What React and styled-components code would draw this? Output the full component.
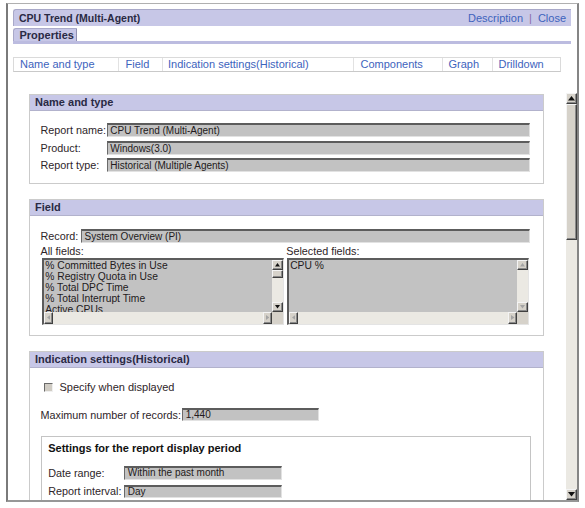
import React from 'react';
import styled, { createGlobalStyle } from 'styled-components';

const GlobalStyle = createGlobalStyle`
  html, body { margin: 0; padding: 0; background: #fff; }
  body { font-family: "Liberation Sans", Arial, sans-serif; font-size: 11px; line-height: 1.15; color: #333; }
  * { box-sizing: border-box; }
`;

const LAV = '#c7c7e7';

const Frame = styled.div`
  margin: 3px 0 0 6px;
  width: 573px;
  height: 499px;
  border-top: 1px solid #b0b0b0;
  border-left: 2px solid #7a7a7a;
  border-right: 2px solid #858585;
  border-bottom: 2px solid #979797;
  display: flex;
  flex-direction: column;
  overflow: hidden;
`;

const TitleBar = styled.div`
  flex: none;
  margin: 5px 6px 0 4.5px;
  height: 17px;
  background: ${LAV};
  border-top: 1px solid #a9a9c9;
  border-left: 1px solid #a9a9c9;
  border-top-left-radius: 3px;
  display: flex;
  align-items: center;
  justify-content: space-between;
  padding: 0 5px 0 5.5px;
`;

const Title = styled.span`
  font-weight: bold;
  font-size: 10.5px;
  color: #2a2a44;
`;

const Links = styled.div`
  display: flex;
  align-items: center;
  font-size: 11px;
`;

const Link = styled.a`
  color: #3d63bd;
  text-decoration: none;
`;

const Sep = styled.span`
  color: #8a6aa8;
  margin: 0 6px;
`;

const Tab = styled.div`
  flex: none;
  margin: 2px 0 0 4.5px;
  width: 64px;
  height: 13px;
  background: ${LAV};
  border-top: 1px solid #a9a9c9;
  border-left: 1px solid #a9a9c9;
  border-right: 1px solid #8f8fb0;
  border-top-left-radius: 3px;
  font-weight: bold;
  font-size: 11px;
  color: #2a2a44;
  line-height: 12px;
  padding-left: 6px;
`;

const TabLine = styled.div`
  flex: none;
  margin: 0 6px 0 4.5px;
  height: 2.5px;
  background: #bcbce0;
`;

const Nav = styled.div`
  flex: none;
  margin: 13.5px 0 0 4.5px;
  width: 548.5px;
  height: 15px;
  border: 1px solid #dadada;
  border-bottom-color: #c9c9c9;
  display: flex;
`;

const NavCell = styled.a`
  flex: ${p => (p.$w ? `0 0 ${p.$w}px` : '1 1 auto')};
  border-right: ${p => (p.$w ? '1px solid #e2e2e2' : 'none')};
  padding-left: ${p => p.$pl || 6}px;
  color: #3d63bd;
  text-decoration: none;
  font-size: 11px;
  line-height: 13px;
  white-space: nowrap;
`;

const ScrollArea = styled.div`
  margin-top: 21px;
  flex: 1;
  display: flex;
  min-height: 0;
`;

const Content = styled.div`
  flex: 1;
  overflow: hidden;
  padding: 0.5px 0 0 21px;
  display: flex;
  flex-direction: column;
  gap: 15px;
`;

const VScroll = styled.div`
  width: ${p => p.$w || 11}px;
  display: flex;
  flex-direction: column;
  background: #ebe9e3;
`;

const SButton = styled.div`
  flex: 0 0 ${p => p.$size || 11}px;
  background: #d6d2ca;
  border: 1px solid;
  border-color: #f4f4f4 #404040 #404040 #f4f4f4;
  box-shadow: inset -1px -1px #8a8a8a;
  display: flex;
  align-items: center;
  justify-content: center;
`;

const Thumb = styled.div`
  flex: 0 0 ${p => p.$h}px;
  background: #d6d2ca;
  border: 1px solid;
  border-color: #f4f4f4 #404040 #404040 #f4f4f4;
  box-shadow: inset -1px -1px #8a8a8a;
`;

const Track = styled.div`
  flex: 1;
`;

const Panel = styled.section`
  flex: none;
  width: 515px;
  border: 1px solid #cbcbcb;
`;

const PanelHeader = styled.h2`
  margin: 0;
  height: 16px;
  background: ${LAV};
  border-bottom: 1px solid #b2b2cc;
  font-size: 11px;
  font-weight: bold;
  color: #2a2a44;
  line-height: 15px;
  padding-left: 5px;
`;

const PanelBody = styled.div`
  padding: ${p => p.$pad};
  display: flex;
  flex-direction: column;
`;

const Stack = styled.div`
  display: flex;
  flex-direction: column;
  gap: ${p => p.$gap}px;
`;

const FormRow = styled.div`
  flex: none;
  display: grid;
  grid-template-columns: ${p => p.$label}px ${p => (p.$input ? `${p.$input}px` : '1fr')};
  align-items: center;
  height: ${p => p.$h || 14}px;
  margin-top: ${p => p.$mt || 0}px;
`;

const Label = styled.span`
  font-size: 10.8px;
  line-height: 12px;
  color: #2e2529;
  white-space: nowrap;
`;

const Field = styled.div`
  height: ${p => p.$h || 14}px;
  background: #c2c2c2;
  border-top: 2px solid #5c5c5c;
  border-left: 1px solid #6a6a6a;
  border-right: 1px solid #e2e2e2;
  border-bottom: 1px solid #e2e2e2;
  font-size: 10px;
  color: #221a20;
  padding-left: 2.5px;
  line-height: ${p => (p.$h || 14) - 3}px;
  white-space: nowrap;
  overflow: hidden;
`;

const FieldsGrid = styled.div`
  display: grid;
  grid-template-columns: 245.7px 243.3px;
  margin-top: 2px;
`;

const FieldCol = styled.div`
  display: flex;
  flex-direction: column;
`;

const ListLabel = styled.span`
  font-size: 10.8px;
  color: #2e2529;
  height: 13px;
  line-height: 13px;
  white-space: nowrap;
`;

const ListBox = styled.div`
  margin-left: ${p => p.$ml}px;
  width: ${p => p.$w}px;
  height: 67px;
  border-top: 2px solid #5c5c5c;
  border-left: 2px solid #5c5c5c;
  border-right: 1px solid #e4e4e4;
  border-bottom: 1px solid #e4e4e4;
  display: grid;
  grid-template-columns: 1fr 11px;
  grid-template-rows: 1fr 12px;
`;

const ListItems = styled.ul`
  margin: 0;
  padding: 0 0 0 1px;
  list-style: none;
  background: #c2c2c2;
  overflow: hidden;
  font-size: 10.3px;
  line-height: 11px;
  color: #221a20;
`;

const ListItem = styled.li`
  white-space: nowrap;
`;

const HScroll = styled.div`
  display: flex;
  background: #ebe9e3;
`;

const HButton = styled(SButton)`
  flex: 0 0 9px;
`;

const Corner = styled.div`
  background: #d6d2ca;
`;

const CheckRow = styled.label`
  display: flex;
  align-items: center;
  height: 13px;
  padding-left: 3.3px;
  font-size: 11px;
  color: #2e2529;
`;

const CheckBox = styled.span`
  width: 9px;
  height: 9px;
  margin-right: 6.7px;
  background: #d0ccc4;
  border-top: 1px solid #6a6a6a;
  border-left: 1px solid #6a6a6a;
  border-right: 1px solid #f0f0f0;
  border-bottom: 1px solid #f0f0f0;
`;

const InnerBox = styled.div`
  margin-top: 14.3px;
  width: 490.5px;
  height: 80px;
  border: 1px solid #c4c4c4;
  padding: 5px 0 0 6.7px;
`;

const InnerTitle = styled.h3`
  margin: 0 0 11.8px;
  font-size: 11px;
  font-weight: bold;
  color: #111;
  line-height: 13px;
`;

const Arrow = ({ dir, size = 7, disabled }) => {
  const h = Math.ceil(size / 2) + 0.5;
  const horiz = dir === 'left' || dir === 'right';
  const w = horiz ? h : size;
  const hh = horiz ? size : h;
  const pts = {
    up: `0,${h} ${size / 2},0 ${size},${h}`,
    down: `0,0 ${size},0 ${size / 2},${h}`,
    left: `${h},0 ${h},${size} 0,${size / 2}`,
    right: `0,0 0,${size} ${h},${size / 2}`,
  }[dir];
  return (
    <svg width={w} height={hh} viewBox={`0 0 ${w} ${hh}`}>
      <polygon points={pts} fill={disabled ? '#a4a4a4' : '#111'} />
    </svg>
  );
};

const List = ({ items, ml, w, thumb, disabled }) => (
  <ListBox $ml={ml} $w={w}>
    <ListItems>
      {items.map(i => (
        <ListItem key={i}>{i}</ListItem>
      ))}
    </ListItems>
    <VScroll $w={11}>
      <SButton $size={10}><Arrow dir="up" size={5} disabled={disabled} /></SButton>
      {thumb && <Thumb $h={8} />}
      <Track />
      <SButton $size={10}><Arrow dir="down" size={5} disabled={disabled} /></SButton>
    </VScroll>
    <HScroll>
      <HButton><Arrow dir="left" size={5} disabled /></HButton>
      <Track />
      <HButton><Arrow dir="right" size={5} disabled /></HButton>
    </HScroll>
    <Corner />
  </ListBox>
);

const navItems = [
  { t: 'Name and type', w: 105.5, pl: 6.5 },
  { t: 'Field', w: 44, pl: 6.5 },
  { t: 'Indication settings(Historical)', w: 191, pl: 5 },
  { t: 'Components', w: 89, pl: 6.5 },
  { t: 'Graph', w: 50, pl: 5.5 },
  { t: 'Drilldown', pl: 5.5 },
];

export default function App() {
  return (
    <>
      <GlobalStyle />
      <Frame>
        <TitleBar>
          <Title>CPU Trend (Multi-Agent)</Title>
          <Links>
            <Link href="#">Description</Link>
            <Sep>|</Sep>
            <Link href="#">Close</Link>
          </Links>
        </TitleBar>
        <Tab>Properties</Tab>
        <TabLine />
        <Nav>
          {navItems.map(n => (
            <NavCell key={n.t} href="#" $w={n.w} $pl={n.pl}>{n.t}</NavCell>
          ))}
        </Nav>
        <ScrollArea>
          <Content>
            <Panel>
              <PanelHeader>Name and type</PanelHeader>
              <PanelBody $pad="12.7px 13px 10.6px 10.5px">
                <Stack $gap={3.5}>
                  <FormRow $label={66.3}>
                    <Label>Report name:</Label>
                    <Field>CPU Trend (Multi-Agent)</Field>
                  </FormRow>
                  <FormRow $label={66.3}>
                    <Label>Product:</Label>
                    <Field>Windows(3.0)</Field>
                  </FormRow>
                  <FormRow $label={66.3}>
                    <Label>Report type:</Label>
                    <Field>Historical (Multiple Agents)</Field>
                  </FormRow>
                </Stack>
              </PanelBody>
            </Panel>
            <Panel>
              <PanelHeader>Field</PanelHeader>
              <PanelBody $pad="13px 13px 10px 10.5px">
                <FormRow $label={40.5}>
                  <Label>Record:</Label>
                  <Field>System Overview (PI)</Field>
                </FormRow>
                <FieldsGrid>
                  <FieldCol>
                    <ListLabel>All fields:</ListLabel>
                    <List
                      ml={1.7}
                      w={241.6}
                      thumb
                      items={[
                        '% Committed Bytes in Use',
                        '% Registry Quota in Use',
                        '% Total DPC Time',
                        '% Total Interrupt Time',
                        'Active CPUs',
                      ]}
                    />
                  </FieldCol>
                  <FieldCol>
                    <ListLabel>Selected fields:</ListLabel>
                    <List ml={1} w={242.3} disabled items={['CPU %']} />
                  </FieldCol>
                </FieldsGrid>
              </PanelBody>
            </Panel>
            <Panel>
              <PanelHeader>Indication settings(Historical)</PanelHeader>
              <PanelBody $pad="13px 13px 10px 10.5px">
                <CheckRow>
                  <CheckBox />
                  Specify when displayed
                </CheckRow>
                <FormRow $label={141.7} $input={137.3} $h={13} $mt={14.5}>
                  <Label>Maximum number of records:</Label>
                  <Field $h={13}>1,440</Field>
                </FormRow>
                <InnerBox>
                  <InnerTitle>Settings for the report display period</InnerTitle>
                  <Stack $gap={5}>
                    <FormRow $label={76} $input={158.3} $h={13.3}>
                      <Label>Date range:</Label>
                      <Field $h={13.3}>Within the past month</Field>
                    </FormRow>
                    <FormRow $label={76} $input={158.3} $h={13.3}>
                      <Label>Report interval:</Label>
                      <Field $h={13.3}>Day</Field>
                    </FormRow>
                  </Stack>
                </InnerBox>
              </PanelBody>
            </Panel>
          </Content>
          <VScroll $w={11}>
            <SButton $size={11.3}><Arrow dir="up" size={7} /></SButton>
            <Thumb $h={135.3} />
            <Track />
            <SButton $size={11}><Arrow dir="down" size={7} /></SButton>
          </VScroll>
        </ScrollArea>
      </Frame>
    </>
  );
}
